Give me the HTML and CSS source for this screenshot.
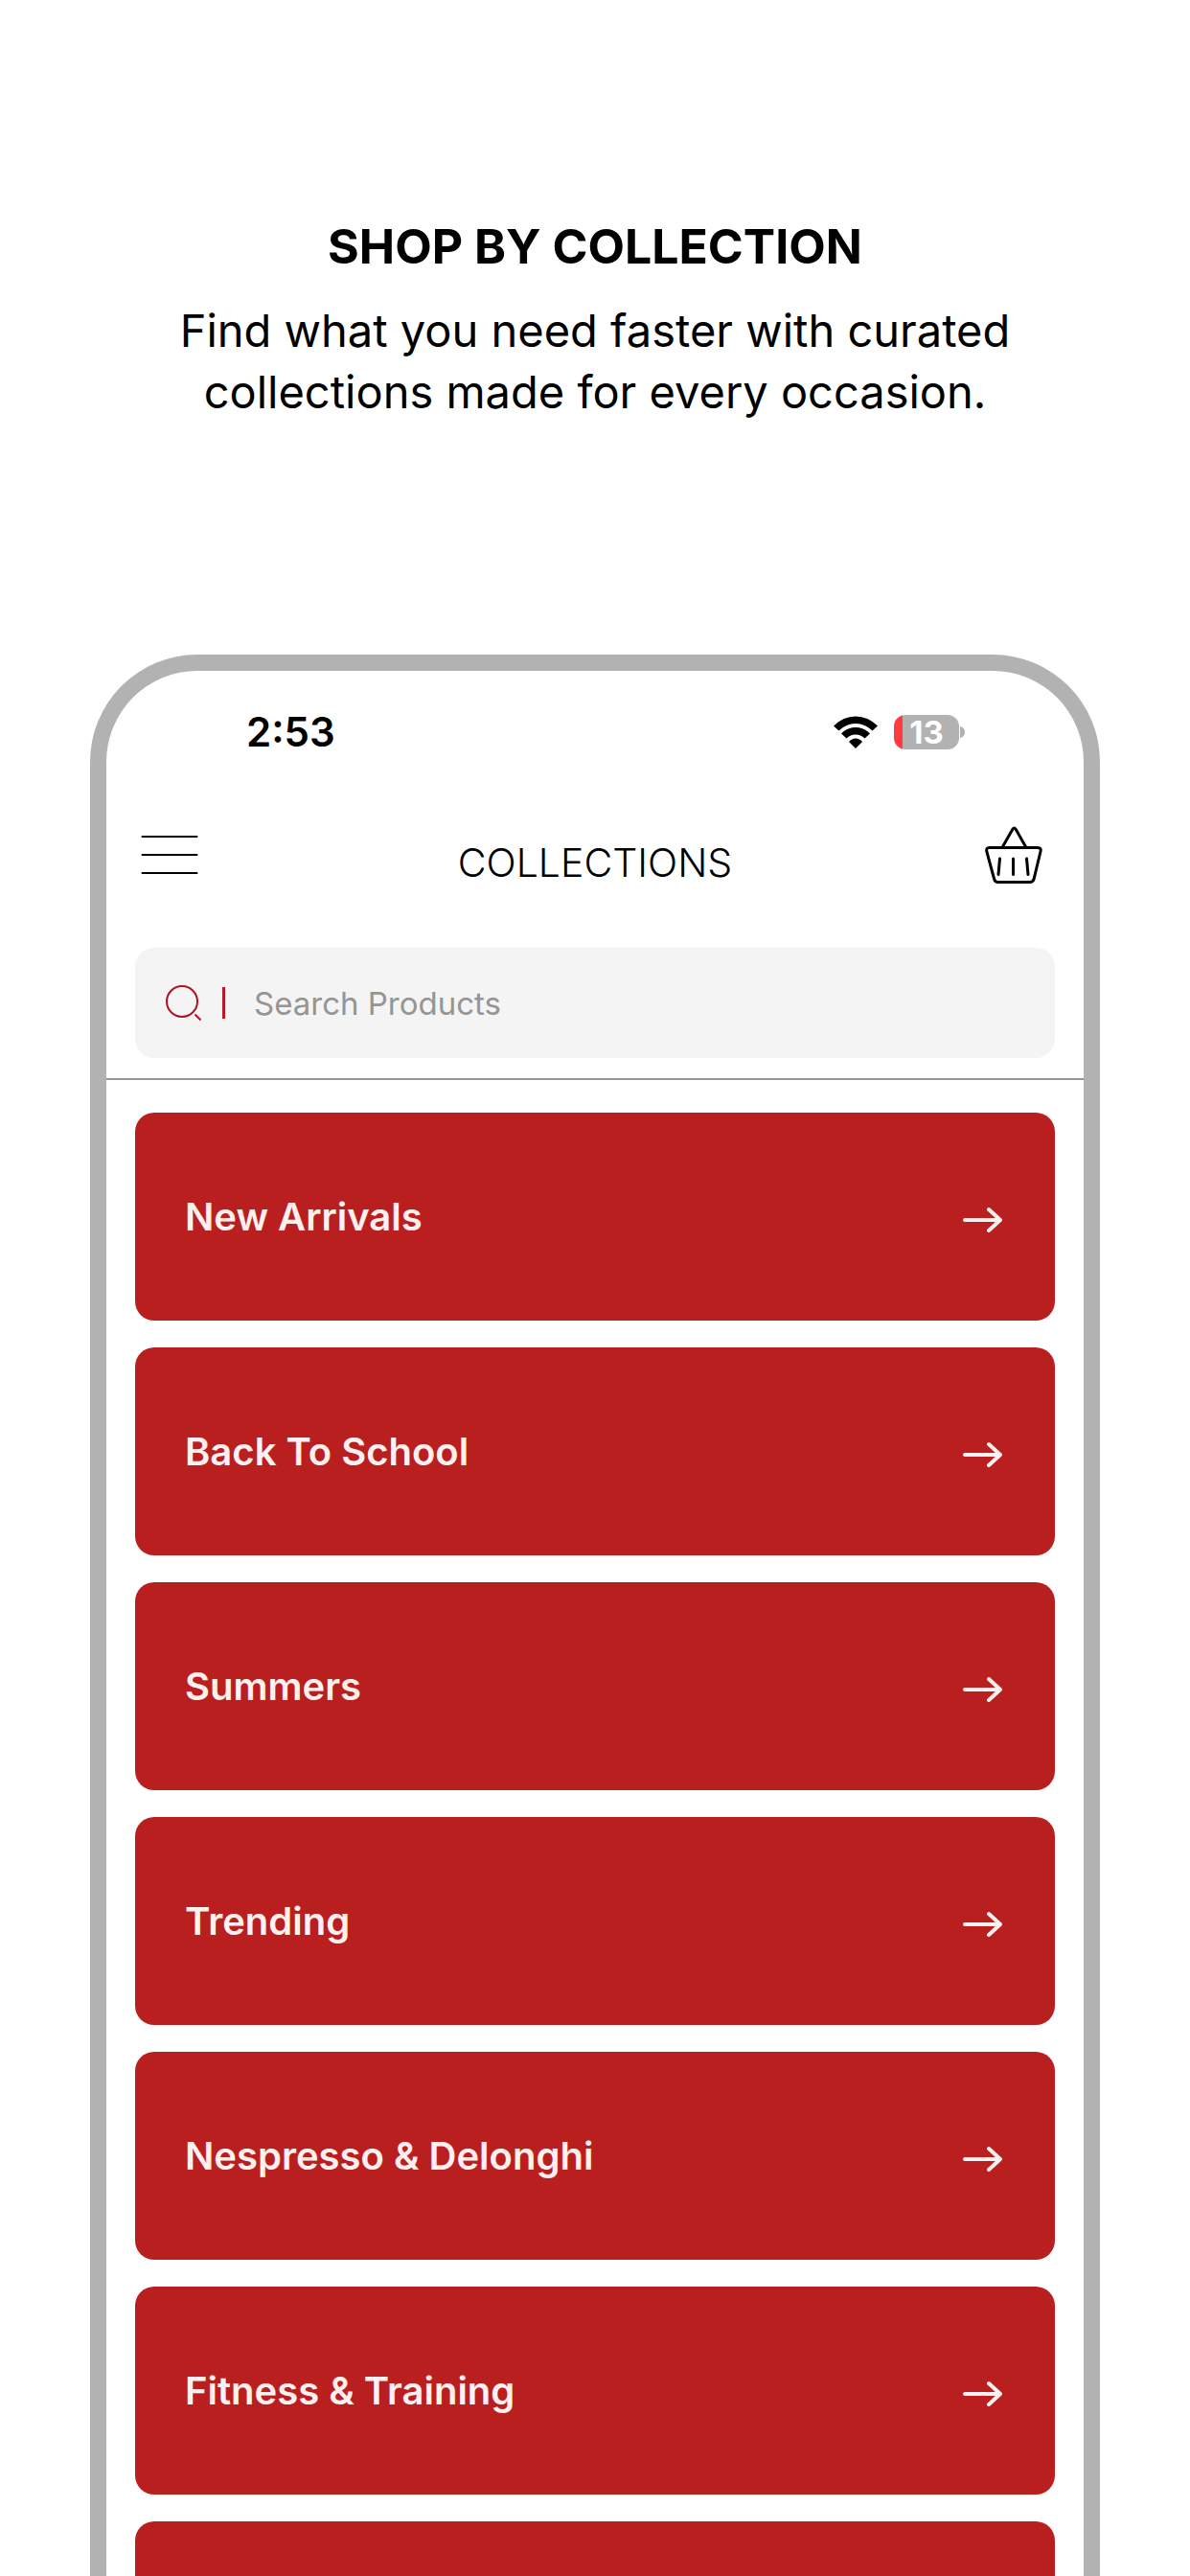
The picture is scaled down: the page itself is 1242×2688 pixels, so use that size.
FILE: index.html
```html
<!DOCTYPE html>
<html lang="en">
<head>
  <meta charset="UTF-8" />
  <meta name="viewport" content="width=device-width, initial-scale=1.0" />
  <title>Shop by Collection</title>
  <link rel="stylesheet" href="styles.css">
</head>
<body>
  <header class="intro">
    <h1>SHOP BY COLLECTION</h1>
    <p>Find what you need faster with curated<br>collections made for every occasion.</p>
  </header>

  <main class="phone">
    <div class="status-bar">
      <span class="time">2:53</span>
      <div class="status-icons">
        <svg class="wifi" viewBox="0 0 46 34" aria-hidden="true">
          <path d="M0 10.500Q10 .5 23 .5T46 10.500L40.500 15.500Q33 8 23 8T5.500 15.500Z"/>
          <path d="M8 18.500Q14.500 12 23 12T38 18.500L32.500 23.500Q28.500 19.500 23 19.500T13.500 23.500Z"/>
          <path d="M16 27Q19 23.500 23 23.500T30 27L23 34Z"/>
        </svg>
        <div class="battery"><span>13</span></div>
        <svg class="battery-tip" viewBox="0 0 5 12" aria-hidden="true"><path d="M0 0Q5 1 5 6T0 12Z"/></svg>
      </div>
    </div>

    <nav class="top-bar">
      <button class="icon-button menu" aria-label="Menu">
        <svg viewBox="0 0 60 60" aria-hidden="true">
          <path d="M1.500 11H58.500M1.500 30H58.500M1.500 49H58.500"/>
        </svg>
      </button>
      <h2>COLLECTIONS</h2>
      <button class="icon-button" aria-label="Basket">
        <svg viewBox="0 0 60 60" aria-hidden="true">
          <path d="M18.500 21.500L29 3Q30.500 .8 32 3L42.500 21.500"/>
          <path d="M4.500 22.500H55Q59 22.500 58 26.500L51 55.500Q50 58.500 47 58.500H13.500Q10.500 58.500 9.700 55.500L1.800 26.500Q1 22.500 4.500 22.500Z"/>
          <path d="M15.500 34L14 50.500M29.500 34V50.500M43.500 34L45 50.500"/>
        </svg>
      </button>
    </nav>

    <label class="search">
      <svg viewBox="0 0 38 38" aria-hidden="true">
        <circle cx="17" cy="17" r="16"/>
        <path d="M30.500 30.500L36.500 36.500"/>
      </svg>
      <span class="separator"></span>
      <input type="search" placeholder="Search Products" aria-label="Search Products">
    </label>

    <div class="collections">
      <a href="#" class="collection">New Arrivals
        <svg viewBox="0 0 42 32" aria-hidden="true"><path d="M2 19H39M27 8L39 19L27 30"/></svg>
      </a>
      <a href="#" class="collection">Back To School
        <svg viewBox="0 0 42 32" aria-hidden="true"><path d="M2 19H39M27 8L39 19L27 30"/></svg>
      </a>
      <a href="#" class="collection">Summers
        <svg viewBox="0 0 42 32" aria-hidden="true"><path d="M2 19H39M27 8L39 19L27 30"/></svg>
      </a>
      <a href="#" class="collection">Trending
        <svg viewBox="0 0 42 32" aria-hidden="true"><path d="M2 19H39M27 8L39 19L27 30"/></svg>
      </a>
      <a href="#" class="collection">Nespresso &amp; Delonghi
        <svg viewBox="0 0 42 32" aria-hidden="true"><path d="M2 19H39M27 8L39 19L27 30"/></svg>
      </a>
      <a href="#" class="collection">Fitness &amp; Training
        <svg viewBox="0 0 42 32" aria-hidden="true"><path d="M2 19H39M27 8L39 19L27 30"/></svg>
      </a>
      <div class="collection"></div>
    </div>
  </main>
</body>
</html>
```
FILE: styles.css
```css
* {
  box-sizing: border-box;
}
body {
  font-family: Inter, "Liberation Sans", sans-serif;
  margin: 0;
  height: 100vh;
  display: flex;
  flex-direction: column;
  overflow: hidden;
  background: #fff;
  color: #000;
}
h1, h2, p {
  margin: 0;
}
.intro {
  padding: 227px 94px 242px;
  text-align: center;
}
.intro h1 {
  font-size: 50px;
  line-height: 60px;
  font-weight: 700;
}
.intro p {
  margin-top: 26px;
  font-size: 47px;
  line-height: 64px;
}
.phone {
  flex: 1;
  min-height: 0;
  margin: 0 94px;
  border: 17px solid #b2b2b2;
  border-bottom: 0;
  border-radius: 112px 112px 0 0;
  overflow: hidden;
}
.status-bar {
  display: flex;
  justify-content: space-between;
  align-items: center;
  padding: 40px 124px 0 146px;
  height: 88px;
}
.time {
  font-size: 42px;
  line-height: 48px;
  font-weight: 600;
}
.status-icons {
  display: flex;
  align-items: center;
}
.wifi {
  width: 46px;
  height: 34px;
  margin-right: 17px;
}
.battery {
  width: 68px;
  height: 36px;
  border-radius: 12px;
  background: linear-gradient(to right, #ff3b40 9px, #b2b2b2 9px);
  color: #fff;
  font-size: 33px;
  line-height: 36px;
  font-weight: 700;
  text-align: center;
}
.battery-tip {
  width: 5px;
  height: 12px;
  margin-left: 1px;
  fill: #b2b2b2;
}
.top-bar {
  display: flex;
  align-items: center;
  padding: 0 43px 0 36px;
  margin-top: 74px;
  height: 60px;
}
.top-bar h2 {
  flex: 1;
  padding: 16px 0 0 7px;
  font-size: 41px;
  line-height: 48px;
  font-weight: 300;
  text-align: center;
}
.icon-button {
  width: 60px;
  height: 60px;
  padding: 0;
  border: 0;
  background: none;
  cursor: pointer;
}
.icon-button svg {
  display: block;
  fill: none;
  stroke: #000;
  stroke-width: 3;
  stroke-linecap: round;
}
.menu svg {
  stroke-width: 2;
}
.search {
  display: flex;
  align-items: center;
  height: 115px;
  margin: 67px 30px 21px;
  padding: 0 32px;
  border-radius: 20px;
  background: #f4f4f4;
}
.search svg {
  width: 38px;
  height: 38px;
  fill: none;
  stroke: #b01124;
  stroke-width: 2;
}
.separator {
  width: 3px;
  height: 33px;
  margin: 0 30px 0 21px;
  background: #b9182a;
}
.search input {
  flex: 1;
  min-width: 0;
  padding: 0;
  border: 0;
  outline: 0;
  background: none;
  font-family: inherit;
  font-size: 33px;
}
.search input::placeholder {
  color: #959595;
  opacity: 1;
}
.collections {
  display: flex;
  flex-direction: column;
  gap: 28px;
  padding: 34px 30px 0;
  border-top: 2px solid #929498;
}
.collection {
  display: flex;
  flex-shrink: 0;
  justify-content: space-between;
  align-items: center;
  height: 217px;
  padding: 0 54px 0 52px;
  border-radius: 20px;
  background: #ba1f20;
  color: #fff0f0;
  font-size: 40px;
  font-weight: 600;
  text-decoration: none;
}
.collection svg {
  width: 42px;
  height: 32px;
  fill: none;
  stroke: #fff0f0;
  stroke-width: 4;
  stroke-linecap: round;
  stroke-linejoin: round;
}
```
